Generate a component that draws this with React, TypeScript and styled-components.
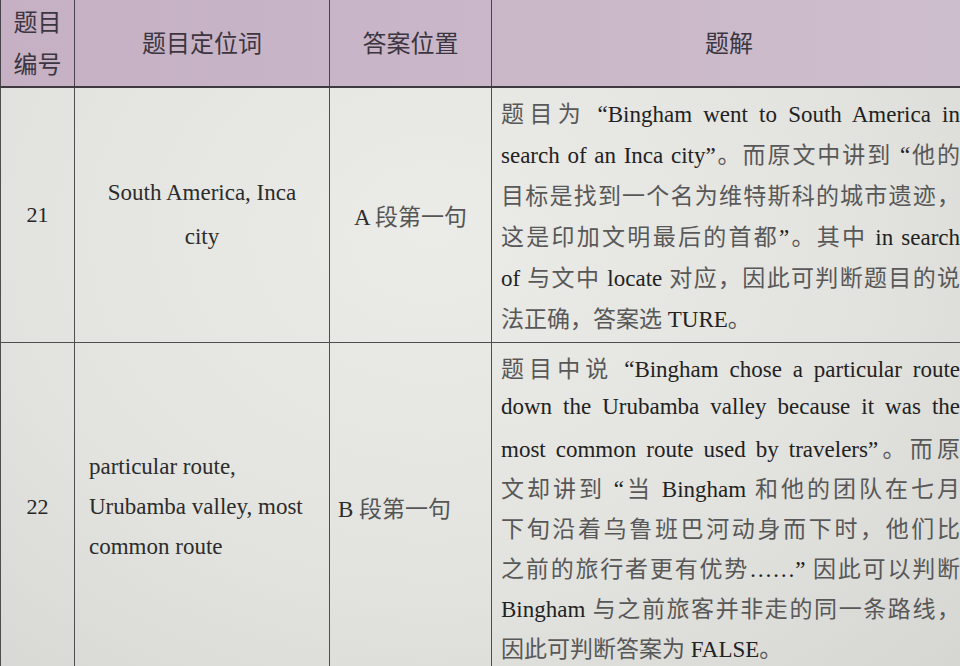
import styled, { createGlobalStyle } from 'styled-components';

const GlobalStyle = createGlobalStyle`
  body {
    margin: 0;
    overflow: hidden;
    background: #dcdcd8;
  }
`;

const Sheet = styled.div`
  width: 960px;
  height: 666px;
  overflow: hidden;
  background: radial-gradient(ellipse at 45% 35%, #ebebe7 0%, #e3e3df 55%, #d6d6d2 100%);
`;

const Table = styled.table`
  border-collapse: collapse;
  table-layout: fixed;
  width: 966px;
  margin-top: -2px;
  margin-left: 0;
  font-family: 'Liberation Serif', 'Noto Sans CJK SC', serif;
  color: #4a4a4a;
`;

const HeadRow = styled.tr`
  height: 88px;
  background: linear-gradient(90deg, #c6b0c4 0%, #c9b6c8 45%, #cdbecd 100%);
`;

const HeadCell = styled.th<{ $tight?: boolean }>`
  border: 1.5px solid #4a454c;
  border-bottom: 2px solid #3e3a40;
  font-family: 'Noto Sans CJK SC', sans-serif;
  font-weight: 400;
  font-size: 24px;
  line-height: ${(p) => (p.$tight ? '42px' : '30px')};
  color: #3c3640;
  text-align: center;
  vertical-align: middle;
  padding: 0;
`;

const Cell = styled.td<{ $align?: 'left' | 'center'; $pad?: string }>`
  border: 1.5px solid #4e4e4e;
  vertical-align: middle;
  text-align: ${(p) => p.$align || 'center'};
  padding: ${(p) => p.$pad || '0'};
`;

const Num = styled.span`
  font-size: 22px;
  color: #262626;
`;

const Keys = styled.div<{ $lh: number }>`
  font-size: 23px;
  line-height: ${(p) => p.$lh}px;
  color: #2c2c2c;
`;

const Place = styled.span`
  font-size: 23px;
  color: #2c2c2c;
`;

const PlaceHan = styled.span`
  font-family: 'Noto Sans CJK SC', sans-serif;
  font-size: 23px;
  color: #555;
`;

const Solution = styled.div<{ $lh: number }>`
  font-size: 23px;
  line-height: ${(p) => p.$lh}px;
`;

const Line = styled.div<{ $last?: boolean; $h: number }>`
  height: ${(p) => p.$h}px;
  overflow: visible;
  white-space: nowrap;
  text-align: ${(p) => (p.$last ? 'left' : 'justify')};
  text-align-last: ${(p) => (p.$last ? 'left' : 'justify')};
`;

const Latin = styled.span`
  color: #222;
  font-size: 23px;
`;

const Han = styled.span`
  font-family: 'Noto Sans CJK SC', sans-serif;
  color: #585858;
`;

const rows = [
  {
    num: '21',
    keys: ['South America, Inca', 'city'],
    keysAlign: 'center' as const,
    keysLh: 44,
    place: ['A', '段第一句'],
    placeAlign: 'center' as const,
    lh: 41,
    lines: [
      '题目为 “Bingham went to South America in',
      'search of an Inca city”。而原文中讲到 “他的',
      '目标是找到一个名为维特斯科的城市遗迹，',
      '这是印加文明最后的首都”。其中 in search',
      'of 与文中 locate 对应，因此可判断题目的说',
      '法正确，答案选 TURE。',
    ],
  },
  {
    num: '22',
    keys: ['particular route,', 'Urubamba valley, most', 'common route'],
    keysAlign: 'left' as const,
    keysLh: 40,
    place: ['B', '段第一句'],
    placeAlign: 'left' as const,
    lh: 40,
    lines: [
      '题目中说 “Bingham chose a particular route',
      'down the Urubamba valley because it was the',
      'most common route used by travelers”。而原',
      '文却讲到 “当 Bingham 和他的团队在七月',
      '下旬沿着乌鲁班巴河动身而下时，他们比',
      '之前的旅行者更有优势……” 因此可以判断',
      'Bingham 与之前旅客并非走的同一条路线，',
      '因此可判断答案为 FALSE。',
    ],
  },
];

function renderLine(text: string) {
  const parts = text.split(/([\x20-\x7E“”…]+)/).filter(Boolean);
  return parts.map((part, i) =>
    /[\x20-\x7E“”…]/.test(part) ? <Latin key={i}>{part}</Latin> : <Han key={i}>{part}</Han>,
  );
}

function App() {
  return (
    <>
      <GlobalStyle />
      <Sheet>
        <Table>
          <colgroup>
            <col style={{ width: 74 }} />
            <col style={{ width: 255 }} />
            <col style={{ width: 162 }} />
            <col style={{ width: 475 }} />
          </colgroup>
          <thead>
            <HeadRow>
              <HeadCell $tight>
                题目
                <br />
                编号
              </HeadCell>
              <HeadCell>题目定位词</HeadCell>
              <HeadCell>答案位置</HeadCell>
              <HeadCell>题解</HeadCell>
            </HeadRow>
          </thead>
          <tbody>
            {rows.map((row) => (
              <tr key={row.num}>
                <Cell>
                  <Num>{row.num}</Num>
                </Cell>
                <Cell $align={row.keysAlign} $pad={row.keysAlign === 'left' ? '0 6px 0 14px' : '0 12px'}>
                  <Keys $lh={row.keysLh}>
                    {row.keys.map((k) => (
                      <div key={k}>{k}</div>
                    ))}
                  </Keys>
                </Cell>
                <Cell $align={row.placeAlign} $pad={row.placeAlign === 'left' ? '0 0 0 8px' : '0'}>
                  <Place>{row.place[0]} </Place>
                  <PlaceHan>{row.place[1]}</PlaceHan>
                </Cell>
                <Cell $align="left" $pad="4px 6px 4px 9px">
                  <Solution $lh={row.lh}>
                    {row.lines.map((l, i) => (
                      <Line key={i} $h={row.lh} $last={i === row.lines.length - 1}>
                        {renderLine(l)}
                      </Line>
                    ))}
                  </Solution>
                </Cell>
              </tr>
            ))}
          </tbody>
        </Table>
      </Sheet>
    </>
  );
}

export default App;
